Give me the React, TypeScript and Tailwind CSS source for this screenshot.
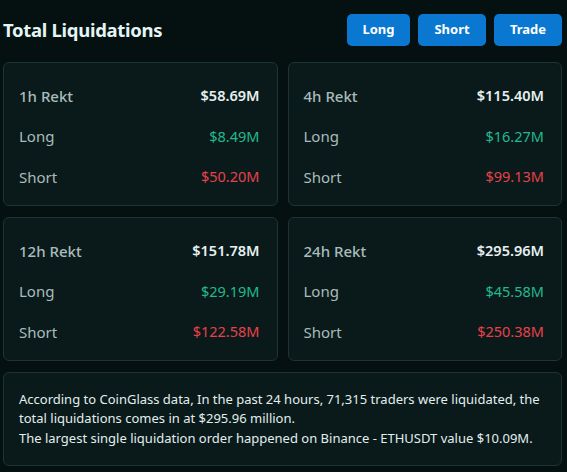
type Stat = {
  period: string;
  total: string;
  long: string;
  short: string;
};

const stats: Stat[] = [
  { period: "1h Rekt", total: "$58.69M", long: "$8.49M", short: "$50.20M" },
  { period: "4h Rekt", total: "$115.40M", long: "$16.27M", short: "$99.13M" },
  { period: "12h Rekt", total: "$151.78M", long: "$29.19M", short: "$122.58M" },
  { period: "24h Rekt", total: "$295.96M", long: "$45.58M", short: "$250.38M" },
];

function StatCard({ stat }: { stat: Stat }) {
  return (
    <div className="flex h-[144px] flex-col rounded-md border border-[#1d3434] bg-[#0a1a1a] pl-[15px] pr-[17px] pt-[13px]">
      <div className="flex h-[40px] items-center justify-between">
        <span className="text-[15px] font-medium text-[#a9bcbc]">{stat.period}</span>
        <span className="text-[14.5px] font-semibold text-[#e6f0f0]">{stat.total}</span>
      </div>
      <div className="flex h-[41px] items-center justify-between">
        <span className="text-[15px] text-[#a9bcbc]">Long</span>
        <span className="text-[14.5px] text-[#22b98e]">{stat.long}</span>
      </div>
      <div className="flex h-[40px] items-center justify-between">
        <span className="text-[15px] text-[#a9bcbc]">Short</span>
        <span className="text-[14.5px] text-[#e8414b]">{stat.short}</span>
      </div>
    </div>
  );
}

export default function App() {
  return (
    <div
      className="h-[472px] w-[567px] overflow-hidden bg-[#051010] pl-[3px] pr-[5px]"
      style={{ fontFamily: '"Noto Sans", "Open Sans", sans-serif' }}
    >
      <header className="flex items-center justify-between pt-[14px]">
        <h1 className="text-[18.5px] font-bold tracking-[-0.3px] text-[#e4f5f5]">Total Liquidations</h1>
        <div className="flex gap-[8px]">
          <button type="button" className="h-[32px] w-[63px] rounded-[5px] bg-[#0a78d0] text-[13px] font-bold text-white">
            Long
          </button>
          <button type="button" className="h-[32px] w-[68px] rounded-[5px] bg-[#0a78d0] text-[13px] font-bold text-white">
            Short
          </button>
          <button type="button" className="h-[32px] w-[68px] rounded-[5px] bg-[#0a78d0] text-[13px] font-bold text-white">
            Trade
          </button>
        </div>
      </header>

      <div className="mt-[16px] grid grid-cols-2 gap-x-[10px] gap-y-[11px]">
        {stats.map((s) => (
          <StatCard key={s.period} stat={s} />
        ))}
      </div>

      <div className="mt-[11px] flex h-[94px] items-center rounded-md border border-[#1d3434] bg-[#0a1a1a] px-[15px]">
        <p className="text-[13px] leading-[19.5px] text-[#e2eeee]">
          According to CoinGlass data, In the past 24 hours, 71,315 traders were liquidated, the total
          liquidations comes in at $295.96 million.
          <br />
          The largest single liquidation order happened on Binance - ETHUSDT value $10.09M.
        </p>
      </div>
    </div>
  );
}
